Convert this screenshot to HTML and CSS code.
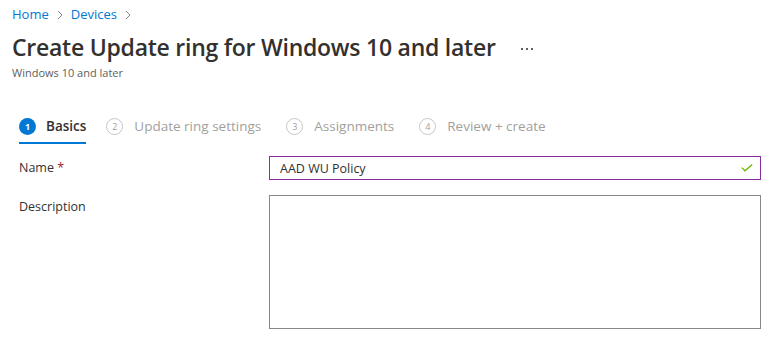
FILE: index.html
```html
<!DOCTYPE html>
<html>
<head>
<meta charset="utf-8">
<link rel="stylesheet" href="styles.css">
</head>
<body>
<div class="page">
  <nav class="crumbs">
    <a class="crumb">Home</a>
    <span class="chev"><svg width="8" height="10" viewBox="0 0 8 10"><path d="M2 1 L6 5 L2 9" fill="none" stroke="#8a8886" stroke-width="1"/></svg></span>
    <a class="crumb">Devices</a>
    <span class="chev"><svg width="8" height="10" viewBox="0 0 8 10"><path d="M2 1 L6 5 L2 9" fill="none" stroke="#8a8886" stroke-width="1"/></svg></span>
  </nav>
  <header class="head">
    <div class="title-row">
      <h1 class="title">Create Update ring for Windows 10 and later</h1>
      <span class="more"><i></i><i></i><i></i></span>
    </div>
    <div class="subtitle">Windows 10 and later</div>
  </header>
  <div class="body">
    <div class="tabs">
      <div class="tab active"><span class="num">1</span><span class="tlabel">Basics</span></div>
      <div class="tab"><span class="num">2</span><span class="tlabel">Update ring settings</span></div>
      <div class="tab"><span class="num">3</span><span class="tlabel">Assignments</span></div>
      <div class="tab"><span class="num">4</span><span class="tlabel">Review + create</span></div>
    </div>
    <div class="form">
      <div class="row">
        <label class="label">Name <span class="req">*</span></label>
        <div class="input valid">
          <span class="val">AAD WU Policy</span>
          <svg class="check" width="12" height="8" viewBox="0 0 12 8"><path d="M0.8 3.6 L4 6.8 L11.2 0.6" fill="none" stroke="#6bb700" stroke-width="1.3"/></svg>
        </div>
      </div>
      <div class="row">
        <label class="label">Description</label>
        <div class="textarea"></div>
      </div>
    </div>
  </div>
</div>
</body>
</html>
```
FILE: styles.css
```css
html, body { margin: 0; padding: 0; background: #fff; }
body {
  font-family: "Segoe UI", "Open Sans", "Noto Sans", sans-serif;
  color: #323130;
  width: 771px;
  height: 340px;
  overflow: hidden;
}
.page { padding: 0 10px 0 12px; }
.crumbs {
  display: flex;
  align-items: center;
  height: 18px;
  padding-top: 5px;
  font-size: 13px;
}
.crumb { color: #0078d4; text-decoration: none; }
.chev { display: inline-flex; width: 8px; margin: 0 7px 0 7px; padding-top: 1px; }
.head { margin-top: 11px; }
.title-row { display: flex; align-items: center; height: 26px; }
.title {
  margin: 0;
  font-size: 23px;
  font-weight: 600;
  color: #323130;
  letter-spacing: -0.25px;
  line-height: 26px;
}
.more { display: inline-flex; gap: 3px; margin-left: 25px; padding-top: 3px; }
.more i { display: block; width: 2px; height: 2px; background: #605e5c; }
.subtitle { font-size: 11px; color: #605e5c; margin-top: 5px; line-height: 15px; }
.body { padding-left: 7px; }
.tabs {
  display: flex;
  margin-top: 30px;
  height: 34px;
}
.tab {
  display: flex;
  align-items: center;
  height: 32px;
  margin-right: 25px;
  color: #a19f9d;
  font-size: 13.5px;
  border-bottom: 2px solid transparent;
  box-sizing: content-box;
}
.tab.active { border-bottom-color: #0078d4; color: #323130; font-weight: 600; margin-right: 20px; }
.num {
  width: 15px;
  height: 15px;
  border: 1px solid #c8c6c4;
  border-radius: 50%;
  display: inline-flex;
  align-items: center;
  justify-content: center;
  font-size: 9px;
  font-weight: 400;
  margin-right: 11px;
  color: #a19f9d;
}
.tab.active .num { background: #0078d4; border-color: #0078d4; color: #fff; font-weight: 700; width: 17px; height: 17px; border: 0; margin-right: 10px; }
.form { margin-top: 12px; }
.row { display: flex; align-items: flex-start; margin-bottom: 15px; }
.label {
  width: 250px;
  flex: none;
  font-size: 12.5px;
  line-height: 24px;
  color: #323130;
}
.req { color: #a4262c; }
.input {
  flex: none;
  height: 22px;
  border: 1px solid #8a2da5;
  display: flex;
  align-items: center;
  justify-content: space-between;
  padding: 0 7px 0 10px;
  box-sizing: content-box;
  font-size: 12.5px;
  color: #323130;
  width: 473px;
}
.check { display: block; }
.textarea {
  flex: none;
  width: 490px;
  height: 132px;
  border: 1px solid #8a8886;
}
```
